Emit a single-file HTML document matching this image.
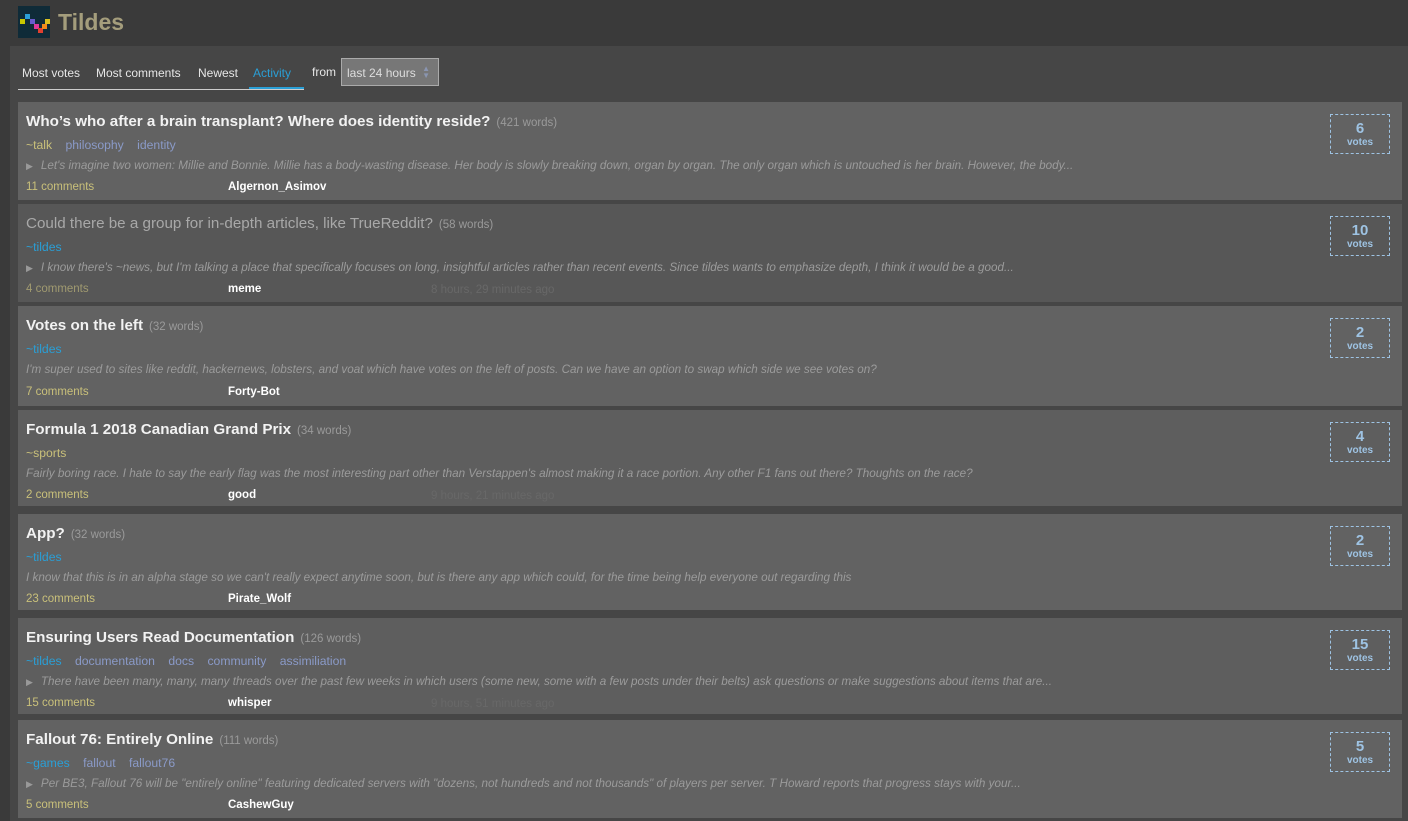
<!DOCTYPE html>
<html><head><meta charset="utf-8"><style>
*{margin:0;padding:0;box-sizing:border-box}
body{width:1408px;height:821px;overflow:hidden;background:#3a3a3a;font-family:"Liberation Sans",sans-serif;position:relative}
.hdr{position:absolute;left:0;top:0;width:1408px;height:46px;background:#3a3a3a}
.logo{position:absolute;left:18px;top:6px;width:32px;height:32px;background:#0f2b38}
.brand{position:absolute;left:58px;top:9px;font-size:23px;font-weight:bold;color:#a49d7c}
.main{position:absolute;left:10px;top:46px;width:1398px;height:775px;background:#464646}
.tabs{position:absolute;left:18px;top:62px;font-size:12px;color:#e6e6e6}
.tab{position:absolute;top:4px;white-space:nowrap}
.uline{position:absolute;left:18px;top:89px;width:286px;height:1px;background:#ccc}
.card{position:absolute;left:18px;width:1384px;height:98px;background:#626262}
.t{position:absolute;left:8px;top:11px;font-size:15.2px;font-weight:bold;color:#f2f2f2;white-space:nowrap}
.t span{font-size:11.5px;font-weight:normal;color:#9a9a9a;margin-left:6px}
.tags{position:absolute;left:8px;top:36px;font-size:12.2px;color:#8a9ac8;white-space:nowrap}
.tags b{font-weight:normal;margin-right:10px}
.ex{position:absolute;left:8px;top:57px;font-size:11.7px;font-style:italic;color:#9b9b9b;white-space:nowrap}
.ex i{font-style:normal;font-size:9px;margin-right:8px;color:#999}
.cm{position:absolute;left:8px;top:79px;font-size:11.5px;color:#c9c07a}
.u{position:absolute;left:210px;top:79px;font-size:11.5px;font-weight:bold;color:#fff}
.ts{position:absolute;left:413px;top:80px;font-size:11.5px;color:#686868}
.v{position:absolute;left:1312px;top:12px;width:60px;height:40px;border:1px dashed #9ec3e3;text-align:center;color:#9ec3e3;font-weight:bold}
.v .n{font-size:15px;margin-top:6px;line-height:16px}
.v .l{font-size:10px;line-height:12px}
</style></head><body>
<div class="hdr">
<div class="logo"><svg width="32" height="32"><rect x="2" y="13" width="5" height="5" fill="#c8c800"/><rect x="7" y="8" width="5" height="5" fill="#2a9fd6"/><rect x="12" y="13" width="5" height="5" fill="#6a5acd"/><rect x="16" y="18" width="5" height="5" fill="#e0399a"/><rect x="20" y="22" width="5" height="5" fill="#e04030"/><rect x="24" y="18" width="5" height="5" fill="#f08a1c"/><rect x="27" y="13" width="5" height="5" fill="#d8c020"/></svg></div>
<div class="brand">Tildes</div>
</div>
<div class="main"></div>
<div class="tabs">
<div class="tab" style="left:4px">Most votes</div>
<div class="tab" style="left:78px">Most comments</div>
<div class="tab" style="left:180px">Newest</div>
<div class="tab" style="left:235px;color:#2a9fd6">Activity</div>
<div style="position:absolute;left:231px;top:25px;width:55px;height:2px;background:#2a9fd6"></div>
<div class="tab" style="left:294px;top:3px">from</div>
<div style="position:absolute;left:323px;top:-4px;width:98px;height:28px;background:#777;border:1px solid #aaa;font-size:12px;color:#ddd;padding:7px 0 0 5px">last 24 hours <span style="position:absolute;right:8px;top:6px;font-size:8px;color:#8a95b0;line-height:7px">▲<br>▼</span></div>
</div>
<div class="uline"></div>

<div class="card" style="top:102px"><div class="t">Who’s who after a brain transplant? Where does identity reside?<span>(421 words)</span></div>
<div class="tags"><b style="color:#c9c07a">~talk</b> <b>philosophy</b> <b>identity</b></div>
<div class="ex"><i>▶</i>Let's imagine two women: Millie and Bonnie. Millie has a body-wasting disease. Her body is slowly breaking down, organ by organ. The only organ which is untouched is her brain. However, the body...</div>
<div class="cm">11 comments</div><div class="u">Algernon_Asimov</div>
<div class="v"><div class="n">6</div><div class="l">votes</div></div></div>

<div class="card" style="top:204px;background:#575757"><div class="t" style="font-weight:normal;color:#a8a8a8">Could there be a group for in-depth articles, like TrueReddit?<span>(58 words)</span></div>
<div class="tags"><b style="color:#2a9fd6">~tildes</b></div>
<div class="ex"><i>▶</i>I know there's ~news, but I'm talking a place that specifically focuses on long, insightful articles rather than recent events. Since tildes wants to emphasize depth, I think it would be a good...</div>
<div class="cm" style="color:#a09a70">4 comments</div><div class="u">meme</div><div class="ts">8 hours, 29 minutes ago</div>
<div class="v"><div class="n">10</div><div class="l">votes</div></div></div>

<div class="card" style="top:306px;height:100px"><div class="t">Votes on the left<span>(32 words)</span></div>
<div class="tags"><b style="color:#2a9fd6">~tildes</b></div>
<div class="ex">I'm super used to sites like reddit, hackernews, lobsters, and voat which have votes on the left of posts. Can we have an option to swap which side we see votes on?</div>
<div class="cm" style="top:80px">7 comments</div><div class="u" style="top:80px">Forty-Bot</div>
<div class="v"><div class="n">2</div><div class="l">votes</div></div></div>

<div class="card" style="top:410px;height:96px;background:#5e5e5e"><div class="t">Formula 1 2018 Canadian Grand Prix<span>(34 words)</span></div>
<div class="tags"><b style="color:#c9c07a">~sports</b></div>
<div class="ex">Fairly boring race. I hate to say the early flag was the most interesting part other than Verstappen's almost making it a race portion. Any other F1 fans out there? Thoughts on the race?</div>
<div class="cm">2 comments</div><div class="u">good</div><div class="ts">9 hours, 21 minutes ago</div>
<div class="v"><div class="n">4</div><div class="l">votes</div></div></div>

<div class="card" style="top:514px;height:96px"><div class="t">App?<span>(32 words)</span></div>
<div class="tags"><b style="color:#2a9fd6">~tildes</b></div>
<div class="ex">I know that this is in an alpha stage so we can't really expect anytime soon, but is there any app which could, for the time being help everyone out regarding this</div>
<div class="cm">23 comments</div><div class="u">Pirate_Wolf</div>
<div class="v"><div class="n">2</div><div class="l">votes</div></div></div>

<div class="card" style="top:618px;height:96px;background:#5e5e5e"><div class="t">Ensuring Users Read Documentation<span>(126 words)</span></div>
<div class="tags"><b style="color:#2a9fd6">~tildes</b> <b>documentation</b> <b>docs</b> <b>community</b> <b>assimiliation</b></div>
<div class="ex"><i>▶</i>There have been many, many, many threads over the past few weeks in which users (some new, some with a few posts under their belts) ask questions or make suggestions about items that are...</div>
<div class="cm">15 comments</div><div class="u">whisper</div><div class="ts">9 hours, 51 minutes ago</div>
<div class="v"><div class="n">15</div><div class="l">votes</div></div></div>

<div class="card" style="top:720px;height:98px"><div class="t">Fallout 76: Entirely Online<span>(111 words)</span></div>
<div class="tags"><b style="color:#2a9fd6">~games</b> <b>fallout</b> <b>fallout76</b></div>
<div class="ex"><i>▶</i>Per BE3, Fallout 76 will be "entirely online" featuring dedicated servers with "dozens, not hundreds and not thousands" of players per server. T Howard reports that progress stays with your...</div>
<div class="cm">5 comments</div><div class="u">CashewGuy</div>
<div class="v"><div class="n">5</div><div class="l">votes</div></div></div>
</body></html>
